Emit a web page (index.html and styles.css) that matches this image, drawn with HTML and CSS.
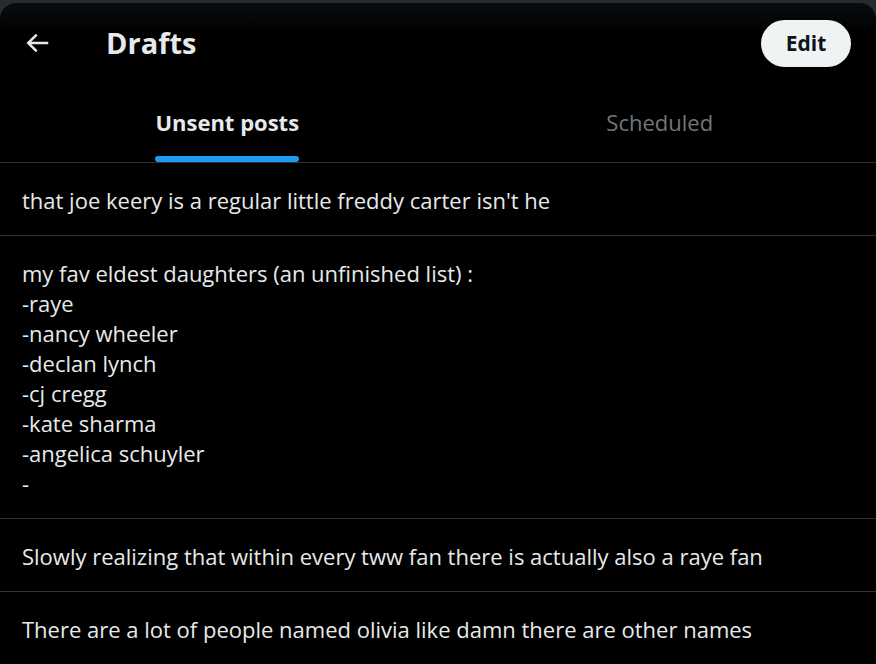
FILE: index.html
```html
<!DOCTYPE html>
<html lang="en">
  <head>
    <meta charset="UTF-8" />
    <meta name="viewport" content="width=device-width, initial-scale=1.0" />
    <title>Drafts</title>
    <link rel="stylesheet" href="styles.css">
  </head>
  <body>
    <div class="modal">
      <div class="header">
        <button class="back" aria-label="Back">
          <svg viewBox="0 0 24 24" width="30" height="30">
            <path d="M7.414 13l5.043 5.04-1.414 1.42L3.586 12l7.457-7.46 1.414 1.42L7.414 11H21v2H7.414z"></path>
          </svg>
        </button>
        <h2 class="title">Drafts</h2>
        <button class="edit">Edit</button>
      </div>

      <div class="tabs">
        <div class="tab active"><span>Unsent posts<i class="bar"></i></span></div>
        <div class="tab"><span>Scheduled</span></div>
      </div>

      <div class="draft">that joe keery is a regular little freddy carter isn't he</div>
      <div class="draft">my fav eldest daughters (an unfinished list) :
-raye
-nancy wheeler
-declan lynch
-cj cregg
-kate sharma
-angelica schuyler
-</div>
      <div class="draft">Slowly realizing that within every tww fan there is actually also a raye fan</div>
      <div class="draft">There are a lot of people named olivia like damn there are other names</div>
    </div>
  </body>
</html>
```

FILE: styles.css
```css
html,
body {
  height: 100%;
}

body {
  margin: 0;
  background-color: #262b30;
  font-family: "Open Sans", "Noto Sans", sans-serif;
  color: #e7e9ea;
  overflow: hidden;
}

.modal {
  margin-top: 3px;
  height: calc(100% - 3px);
  background: linear-gradient(#0a0c0f, #000 30px);
  border-radius: 16px 16px 0 0;
  overflow: hidden;
}

.header {
  height: 80px;
  display: flex;
  align-items: center;
  padding: 0 25px 0 22px;
}

.back {
  width: 30px;
  height: 30px;
  padding: 0;
  border: none;
  background: none;
  fill: #e7e9ea;
  cursor: pointer;
}

.back svg {
  display: block;
}

.title {
  flex: 1;
  margin: 0 0 2px 54px;
  font-size: 29px;
  font-weight: 700;
  color: #e7e9ea;
}

.edit {
  width: 90px;
  height: 47px;
  border: none;
  border-radius: 9999px;
  background-color: #eff3f4;
  color: #0f1419;
  font-family: inherit;
  font-size: 21px;
  font-weight: 700;
  cursor: pointer;
}

.tabs {
  display: flex;
  height: 79px;
  border-bottom: 1px solid #2f3336;
}

.tab {
  flex: 1;
  display: flex;
  justify-content: center;
  font-size: 22px;
  font-weight: 500;
  color: #71767b;
}

.tab:first-child {
  padding-left: 11px;
}

.tab span {
  position: relative;
  display: flex;
  align-items: center;
  padding-bottom: 2px;
}

.tab.active {
  font-weight: 700;
  color: #e7e9ea;
}

.bar {
  position: absolute;
  left: 0;
  right: 0;
  bottom: 0;
  height: 6px;
  border-radius: 9999px;
  background-color: #1d9bf0;
}

.draft {
  padding: 22px 22px 20px;
  font-size: 22px;
  line-height: 30px;
  white-space: pre-line;
  border-bottom: 1px solid #2f3336;
}
```
